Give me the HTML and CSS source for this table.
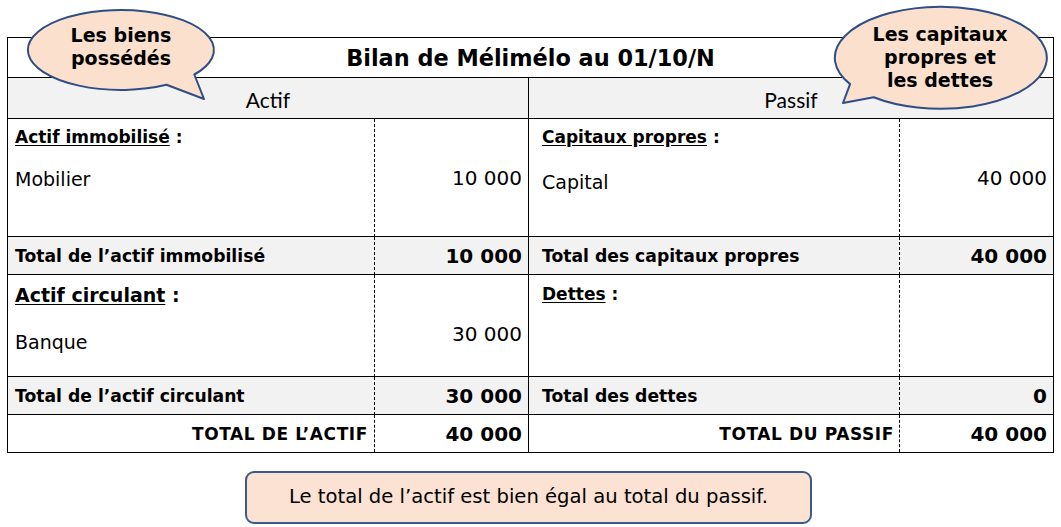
FILE: index.html
```html
<!DOCTYPE html>
<html lang="fr">
<head>
<meta charset="utf-8">
<title>Bilan de Mélimélo</title>
<link rel="stylesheet" href="styles.css">
</head>
<body>
<div class="page">
  <div class="sheet">
    <div class="title">Bilan de Mélimélo au 01/10/N</div>
    <div class="head">
      <div class="hcell hleft">Actif</div>
      <div class="hcell">Passif</div>
    </div>
    <div class="grid">
      <!-- row 1 -->
      <div class="cell lab dash left r1">
        <div class="sec"><u>Actif immobilisé</u> :</div>
        <div class="item item-mob">Mobilier</div>
      </div>
      <div class="cell amt solid r1"><div class="num num-r1">10 000</div></div>
      <div class="cell lab dash right r1">
        <div class="sec"><u>Capitaux propres</u> :</div>
        <div class="item item-cap">Capital</div>
      </div>
      <div class="cell amt r1"><div class="num num-r1">40 000</div></div>

      <!-- total 1 -->
      <div class="cell lab dash left tot grey"><span class="tlabel">Total de l’actif immobilisé</span></div>
      <div class="cell amt solid tot grey"><span class="tnum">10 000</span></div>
      <div class="cell lab dash right tot grey"><span class="tlabel">Total des capitaux propres</span></div>
      <div class="cell amt tot grey"><span class="tnum">40 000</span></div>

      <!-- row 2 -->
      <div class="cell lab dash left r2">
        <div class="sec big"><u>Actif circulant</u> :</div>
        <div class="item item-bq">Banque</div>
      </div>
      <div class="cell amt solid r2"><div class="num num-r2">30 000</div></div>
      <div class="cell lab dash right r2">
        <div class="sec sec-det"><u>Dettes</u> :</div>
      </div>
      <div class="cell amt r2"></div>

      <!-- total 2 -->
      <div class="cell lab dash left tot grey"><span class="tlabel">Total de l’actif circulant</span></div>
      <div class="cell amt solid tot grey"><span class="tnum">30 000</span></div>
      <div class="cell lab dash right tot grey"><span class="tlabel">Total des dettes</span></div>
      <div class="cell amt tot grey"><span class="tnum">0</span></div>

      <!-- grand total -->
      <div class="cell lab dash left fin gt"><span class="glabel">TOTAL DE L’ACTIF</span></div>
      <div class="cell amt solid fin"><span class="tnum">40 000</span></div>
      <div class="cell lab dash right fin gt gt-r"><span class="glabel">TOTAL DU PASSIF</span></div>
      <div class="cell amt fin"><span class="tnum">40 000</span></div>
    </div>
  </div>

  <div class="note">Le total de l’actif est bien égal au total du passif.</div>

  <svg class="bubbles" width="1061" height="527" viewBox="0 0 1061 527" aria-hidden="true">
    <path class="bub" d="M166.5 84.8 A93 40 0 1 1 194.3 74.5 L204 99 Z"/>
    <path class="bub" d="M850.1 84.1 A106 51 0 1 1 873.7 97.2 L843 103 Z"/>
  </svg>
  <div class="btext btext-left">Les biens<br>possédés</div>
  <div class="btext btext-right">Les capitaux<br>propres et<br>les dettes</div>
</div>
</body>
</html>
```

FILE: styles.css
```css
* { box-sizing: border-box; }
html, body { margin: 0; padding: 0; background: #fff; }
body {
  font-family: "DejaVu Sans", Verdana, sans-serif;
  color: #000;
}
.page {
  position: relative;
  width: 1061px;
  height: 527px;
  padding: 37px 0 0 7px;
  overflow: hidden;
}
.sheet {
  width: 1047px;
  border: 1px solid #000;
}
.title {
  height: 40px;
  border-bottom: 1px solid #000;
  display: flex;
  align-items: center;
  justify-content: center;
  font-weight: bold;
  font-size: 22.4px;
  padding-left: 0;
}
.head {
  height: 41px;
  border-bottom: 1px solid #000;
  background: #f2f2f2;
  display: grid;
  grid-template-columns: 521px 524px;
}
.hcell {
  display: flex;
  align-items: center;
  justify-content: center;
  font-family: "Lato", "Noto Sans", sans-serif;
  font-size: 21px;
  padding-top: 2px;
}
.hleft { border-right: 1px solid #000; }

.grid {
  display: grid;
  grid-template-columns: 367px 154px 371px 153px;
  grid-template-rows: 118px 38px 102px 38px 37px;
}
.cell { border-bottom: 1px solid #000; }
.cell.fin { border-bottom: none; }
.dash { border-right: 1px dashed #000; }
.solid { border-right: 1px solid #000; }
.grey { background: #f2f2f2; }

.lab.left { padding-left: 7px; }
.lab.right { padding-left: 13px; }
.amt { padding-right: 6px; text-align: right; }

.r1 { padding-top: 8px; }
.r2 { padding-top: 8px; }

.sec {
  font-weight: bold;
  font-size: 17px;
  line-height: 20px;
}
.sec u { text-underline-offset: 2px; }
.sec.big { font-size: 19px; line-height: 24px; }
.sec-det { padding-top: 1px; }

.item { font-size: 19px; line-height: 23px; }
.item-mob { margin-top: 21px; }
.item-cap { margin-top: 24px; }
.item-bq { margin-top: 24px; }

.num { font-size: 20px; line-height: 23px; }
.num-r1 { margin-top: 40px; }
.num-r2 { margin-top: 40px; }

.tot, .fin {
  display: flex;
  align-items: center;
}
.amt.tot, .amt.fin { justify-content: flex-end; }
.tlabel { font-weight: bold; font-size: 17.2px; }
.tnum { font-weight: bold; font-size: 20px; }
.gt { justify-content: flex-end; padding-right: 6px; }
.gt-r { padding-right: 5px; }
.glabel { font-weight: bold; font-size: 17px; letter-spacing: 0.6px; }

.note {
  margin: 18px 0 0 238px;
  width: 567px;
  height: 53px;
  border: 2px solid #3a5a8f;
  border-radius: 9px;
  background: #fce2d3;
  display: flex;
  align-items: center;
  justify-content: center;
  font-size: 19.6px;
  padding-bottom: 2px;
}

.bubbles {
  position: absolute;
  left: 0;
  top: 0;
  pointer-events: none;
}
.bub {
  fill: #fbe0cd;
  stroke: #2f4d86;
  stroke-width: 2;
  stroke-linejoin: round;
}
.btext {
  position: absolute;
  font-weight: bold;
  font-size: 19px;
  line-height: 23px;
  text-align: center;
}
.btext-left { left: 40px; width: 162px; top: 24px; }
.btext-right { left: 859px; width: 162px; top: 23px; }
```
